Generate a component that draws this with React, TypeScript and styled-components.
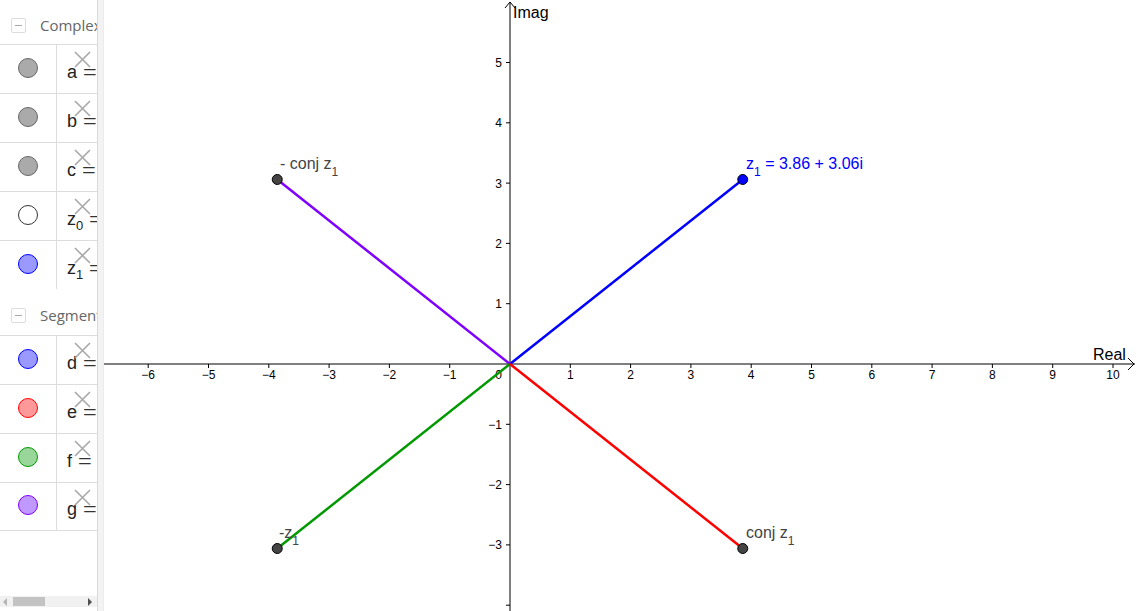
import React from "react";
import styled, { createGlobalStyle } from "styled-components";

const Global = createGlobalStyle`
  html, body { margin: 0; padding: 0; background: #fff; overflow: hidden; }
  #root { width: 1138px; height: 611px; }
`;

const Page = styled.div`
  display: flex;
  width: 1138px;
  height: 611px;
  background: #fff;
`;

const Sidebar = styled.aside`
  width: 97px;
  flex: none;
  display: flex;
  flex-direction: column;
  overflow: hidden;
  background: #fff;
`;

const SidebarContent = styled.div`
  flex: 1;
  overflow: hidden;
  display: flex;
  flex-direction: column;
`;

const GroupHeader = styled.div<{ $h: number }>`
  height: ${(p) => p.$h}px;
  flex: none;
  display: flex;
  align-items: center;
  padding-left: 11px;
  padding-top: 6px;
  box-sizing: border-box;
  gap: 14px;
  white-space: nowrap;
  font-family: "Open Sans", "Noto Sans", sans-serif;
  font-size: 15px;
  color: #666;
`;

const Toggle = styled.span`
  width: 13px;
  height: 13px;
  flex: none;
  border: 1px solid #dcdcdc;
  border-radius: 2px;
  display: flex;
  align-items: center;
  justify-content: center;
  &::after {
    content: "";
    width: 7px;
    height: 1px;
    background: #aaa;
  }
`;

const Row = styled.div<{ $last?: boolean }>`
  height: 49px;
  flex: none;
  box-sizing: border-box;
  display: flex;
  border-top: 1px solid #dddddd;
  border-bottom: ${(p) => (p.$last ? "1px solid #dddddd" : "none")};
  position: relative;
`;

const MarbleCell = styled.div`
  width: 57px;
  flex: none;
  border-right: 1px solid #dddddd;
  display: flex;
  align-items: center;
  justify-content: center;
  padding-bottom: 3px;
  box-sizing: border-box;
`;

const Marble = styled.span<{ $fill: string; $stroke: string }>`
  width: 18px;
  height: 18px;
  border-radius: 50%;
  background: ${(p) => p.$fill};
  border: 1px solid ${(p) => p.$stroke};
`;

const ExprCell = styled.div`
  flex: 1;
  position: relative;
  display: flex;
  align-items: center;
  padding: 6px 0 0 10px;
  white-space: nowrap;
  overflow: hidden;
  font-family: "Liberation Sans", Arial, sans-serif;
  font-size: 18px;
  color: #222;
  sub {
    font-size: 13px;
    vertical-align: -5px;
    line-height: 0;
  }
`;

const Equals = styled.span`
  display: inline-block;
  margin-left: 6px;
  transform: scaleX(1.3);
  transform-origin: left center;
  font-weight: 300;
  color: #333;
`;

const DeleteBtn = styled.svg`
  position: absolute;
  left: 17px;
  top: 6px;
  width: 17px;
  height: 17px;
`;

const ScrollTrack = styled.div`
  height: 11px;
  flex: none;
  margin-bottom: 4px;
  background: #f1f1f1;
  display: flex;
  align-items: center;
  padding: 0 3px;
  gap: 6px;
  box-sizing: border-box;
`;

const ArrowLeft = styled.span`
  width: 0;
  height: 0;
  border-top: 4px solid transparent;
  border-bottom: 4px solid transparent;
  border-right: 4px solid #b5b5b5;
`;

const ArrowRight = styled.span`
  width: 0;
  height: 0;
  margin-left: auto;
  margin-right: 2px;
  border-top: 4px solid transparent;
  border-bottom: 4px solid transparent;
  border-left: 4px solid #505050;
`;

const Thumb = styled.span`
  width: 32px;
  height: 9px;
  background: #c3c3c3;
`;

const Splitter = styled.div`
  width: 7px;
  flex: none;
  background: #f3f3f3;
  border-left: 1px solid #d9d9d9;
  border-right: 1px solid #ececec;
  box-sizing: border-box;
`;

const Graphics = styled.main`
  flex: 1;
  position: relative;
  overflow: hidden;
  background: #fff;
`;

const Chart = styled.svg`
  display: block;
  width: 100%;
  height: 100%;
  font-family: "Liberation Sans", Arial, sans-serif;
`;

type Item = { name: string; sub?: string; fill: string; stroke: string };

const complexItems: Item[] = [
  { name: "a", fill: "#aaaaaa", stroke: "#666666" },
  { name: "b", fill: "#aaaaaa", stroke: "#666666" },
  { name: "c", fill: "#aaaaaa", stroke: "#666666" },
  { name: "z", sub: "0", fill: "#ffffff", stroke: "#333333" },
  { name: "z", sub: "1", fill: "#9999ff", stroke: "#0000ff" },
];

const segmentItems: Item[] = [
  { name: "d", fill: "#9999ff", stroke: "#0000ff" },
  { name: "e", fill: "#ff9999", stroke: "#ff0000" },
  { name: "f", fill: "#99d699", stroke: "#009900" },
  { name: "g", fill: "#bf99ff", stroke: "#7f00ff" },
];

const ItemRow: React.FC<{ item: Item; last?: boolean }> = ({ item, last }) => (
  <Row $last={last}>
    <MarbleCell>
      <Marble $fill={item.fill} $stroke={item.stroke} />
    </MarbleCell>
    <ExprCell>
      <span>
        {item.name}
        {item.sub && <sub>{item.sub}</sub>}
      </span>
      <Equals>=</Equals>
      <DeleteBtn viewBox="0 0 17 17">
        <path d="M1 1 L16 16 M16 1 L1 16" stroke="#a8a8a8" strokeWidth="1.6" fill="none" />
      </DeleteBtn>
    </ExprCell>
  </Row>
);

const OX = 510;
const OY = 364;
const U = 60.3;
const X = (u: number) => OX + u * U;
const Y = (v: number) => OY - v * U;

const fmt = (n: number) => (n < 0 ? "\u2212" + Math.abs(n) : String(n));

const range = (a: number, b: number) => {
  const r: number[] = [];
  for (let i = a; i <= b; i++) if (i !== 0) r.push(i);
  return r;
};

const LabelText: React.FC<{ x: number; y: number; color: string; main: string; rest?: string }> = ({
  x,
  y,
  color,
  main,
  rest,
}) => (
  <text x={x} y={y} fill={color} fontSize="16">
    {main}
    <tspan fontSize="12" dy="7">1</tspan>
    {rest && <tspan dy="-7">{rest}</tspan>}
  </text>
);

export default function App() {
  const re = 3.86;
  const im = 3.06;
  const pts = [
    { x: X(re), y: Y(im), color: "#0000ff" },
    { x: X(-re), y: Y(im), color: "#7f00ff" },
    { x: X(-re), y: Y(-im), color: "#009900" },
    { x: X(re), y: Y(-im), color: "#ff0000" },
  ];
  return (
    <Page>
      <Global />
      <Sidebar>
        <SidebarContent>
          <GroupHeader $h={44}>
            <Toggle />
            <span>Complex</span>
          </GroupHeader>
          {complexItems.map((it, i) => (
            <ItemRow key={i} item={it} />
          ))}
          <GroupHeader $h={46}>
            <Toggle />
            <span>Segment</span>
          </GroupHeader>
          {segmentItems.map((it, i) => (
            <ItemRow key={i} item={it} last={i === segmentItems.length - 1} />
          ))}
        </SidebarContent>
        <ScrollTrack>
          <ArrowLeft />
          <Thumb />
          <ArrowRight />
        </ScrollTrack>
      </Sidebar>
      <Splitter />
      <Graphics>
        <Chart viewBox="104 0 1034 611" preserveAspectRatio="none">
          <line x1={104} y1={OY} x2={1135} y2={OY} stroke="#000" strokeWidth="1" />
          <path d={`M1128 ${OY - 6} L1134 ${OY} L1128 ${OY + 6}`} stroke="#000" fill="none" strokeWidth="1" />
          <line x1={OX} y1={2} x2={OX} y2={611} stroke="#000" strokeWidth="1" />
          <path d={`M${OX - 5} 8 L${OX} 2 L${OX + 5} 8`} stroke="#000" fill="none" strokeWidth="1" />
          {range(-6, 10).map((u) => (
            <g key={"x" + u}>
              <line x1={X(u)} y1={OY} x2={X(u)} y2={OY + 4} stroke="#000" />
              <text x={X(u)} y={OY + 15} fontSize="12" textAnchor="middle" fill="#000">
                {fmt(u)}
              </text>
            </g>
          ))}
          {range(-4, 5).map((v) => (
            <g key={"y" + v}>
              <line x1={OX - 4} y1={Y(v)} x2={OX} y2={Y(v)} stroke="#000" />
              {v > -4 && (
                <text x={OX - 8} y={Y(v) + 4.5} fontSize="12" textAnchor="end" fill="#000">
                  {fmt(v)}
                </text>
              )}
            </g>
          ))}
          <text x={OX - 8} y={OY + 15} fontSize="12" textAnchor="end" fill="#000">
            0
          </text>
          <text x={513} y={18} fontSize="16" fill="#000">
            Imag
          </text>
          <text x={1093} y={360} fontSize="16" fill="#000">
            Real
          </text>
          {pts.map((p, i) => (
            <line key={"s" + i} x1={OX} y1={OY} x2={p.x} y2={p.y} stroke={p.color} strokeWidth="2.5" />
          ))}
          <LabelText x={746} y={169} color="#0000ff" main="z" rest=" = 3.86 + 3.06i" />
          <LabelText x={280} y={169} color="#444" main="- conj z" />
          <LabelText x={279} y={538} color="#444" main="-z" />
          <LabelText x={746} y={538} color="#444" main="conj z" />
          {pts.map((p, i) => (
            <circle
              key={"p" + i}
              cx={p.x}
              cy={p.y}
              r="5"
              fill={i === 0 ? "#0000ff" : "#444444"}
              stroke="#000"
              strokeWidth="1"
            />
          ))}
        </Chart>
      </Graphics>
    </Page>
  );
}
